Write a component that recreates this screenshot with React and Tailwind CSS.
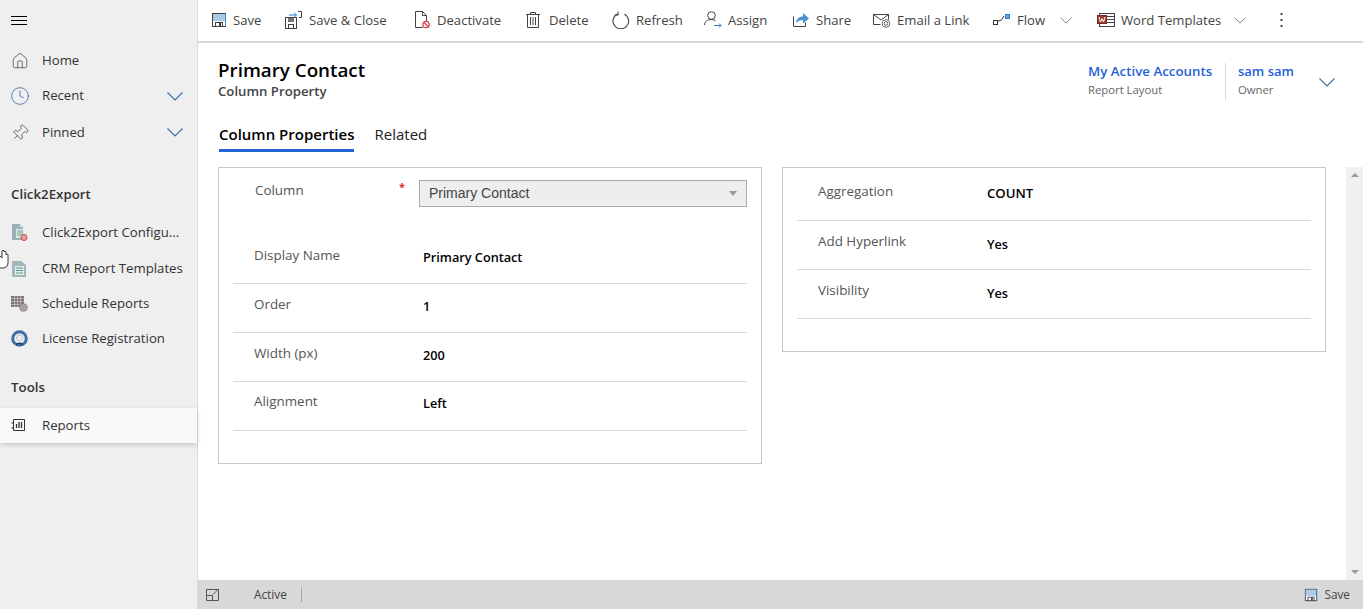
import React from 'react';
import { Home, Clock, Pin } from 'lucide-react';

const Chevron = ({ width = 16, className = '' }) => (
  <svg width={width} height={width / 2 + 1} viewBox="0 0 16 9" fill="none" stroke="currentColor" strokeWidth="1.100" className={`shrink-0 ${className}`}>
    <path d="M.5.5 8 8 15.500.5" />
  </svg>
);

const SaveIcon = ({ size = 16 }) => (
  <svg width={size} height={size} viewBox="0 0 16 16" fill="none">
    <rect x="1.500" y="1.500" width="13" height="13" fill="#fff" stroke="#3f3f3f" />
    <rect x="2" y="2" width="12" height="7" fill="#a9cbe8" />
    <path d="M14.500 1.500v13" stroke="#3f86c6" />
    <rect x="4.500" y="10.500" width="7" height="4" fill="#fff" stroke="#3f3f3f" />
    <rect x="8" y="11" width="2" height="3" fill="#3f3f3f" />
  </svg>
);

const SaveCloseIcon = () => (
  <svg width="18" height="18" viewBox="0 0 18 18" fill="none">
    <rect x="0.500" y="6.500" width="11" height="11" fill="#fff" stroke="#3f3f3f" />
    <rect x="3" y="7" width="6" height="4" fill="#777" />
    <rect x="3.500" y="13.500" width="5" height="4" stroke="#3f3f3f" />
    <path d="M4 4h7M9 1.500 11.500 4 9 6.500" stroke="#2b7cd3" />
    <path d="M13 .5h3.500v6H14" stroke="#3f3f3f" />
  </svg>
);

const DeactivateIcon = () => (
  <svg width="18" height="18" viewBox="0 0 18 18" fill="none">
    <path d="M1.500.5h7l4 4v6M8.500.5v4h4M1.500.5v16h7" stroke="#444" />
    <circle cx="12" cy="13.500" r="3.200" fill="#fff" stroke="#d9434e" strokeWidth="1.300" />
    <path d="m9.800 11.300 4.400 4.400" stroke="#d9434e" strokeWidth="1.300" />
  </svg>
);

const DeleteIcon = () => (
  <svg width="14" height="18" viewBox="0 0 14 18" fill="none" stroke="#444">
    <path d="M0 3.500h14M4.500 3.500v-2h5v2M1.500 3.500v13h11v-13M4.500 6v8M7 6v8M9.500 6v8" />
  </svg>
);

const RefreshIcon = () => (
  <svg width="18" height="18" viewBox="0 0 18 18" fill="none" stroke="#444" strokeWidth="1.100">
    <path d="M5.500 3a7.800 7.800 0 1 0 7 .2" />
    <path d="M6 .5V4H2.500" />
  </svg>
);

const AssignIcon = () => (
  <svg width="18" height="18" viewBox="0 0 18 18" fill="none">
    <circle cx="7.500" cy="4.500" r="3.800" stroke="#444" />
    <path d="M.5 14c0-3.500 3-5.500 7-5.500 1.500 0 2.800.4 4 1.200" stroke="#444" />
    <path d="M10 14.500h7M15 12.500l2 2-2 2" stroke="#2b7cd3" />
  </svg>
);

const ShareIcon = () => (
  <svg width="18" height="18" viewBox="0 0 18 18" fill="none">
    <path d="M1.500 5.500v10h12v-4" stroke="#444" />
    <path d="M4 12c.5-4 3-6.500 7-6.500V2l6 5.500-6 5V9c-3 0-5 1-7 3z" fill="#4a90d2" />
  </svg>
);

const EmailIcon = () => (
  <svg width="18" height="18" viewBox="0 0 18 18" fill="none" stroke="#444">
    <path d="M.5 3.500h15v5M.5 3.500v10h7M.5 3.500l7.500 5.500 7.500-5.500" />
    <circle cx="13" cy="12.500" r="1.800" stroke="#666" />
    <circle cx="13" cy="12.500" r="3.800" stroke="#666" />
  </svg>
);

const FlowIcon = () => (
  <svg width="18" height="18" viewBox="0 0 18 18" fill="none">
    <rect x="0.500" y="9.500" width="4" height="4" stroke="#333" />
    <path d="m5 10 3-.5L11 5" stroke="#333" />
    <rect x="12.500" y="3.500" width="4" height="4" fill="#6aa9de" stroke="#2b7cd3" />
  </svg>
);

const WordIcon = () => (
  <svg width="18" height="18" viewBox="0 0 18 18" fill="none">
    <rect x="2.500" y="2.500" width="15" height="13" fill="#fff" stroke="#444" />
    <path d="M10 5.500h7M10 8.500h7M10 11.500h7" stroke="#444" />
    <rect x="0.500" y="4.500" width="9" height="8" fill="#9c3b30" stroke="#7a2a20" />
    <path d="m2 6 1.500 5L5 7.500 6.500 11 8 6" stroke="#fff" />
  </svg>
);

const ExportDocIcon = () => (
  <svg width="17" height="17" viewBox="0 0 17 17">
    <path d="M1 0h8l3 3v13H1z" fill="#9db0b8" />
    <path d="M9 0l3 3H9z" fill="#dfe6e9" />
    <rect x="5" y="5" width="8" height="9" fill="#dfe9e4" />
    <path d="M6 7h6M6 9h6M6 11h6" stroke="#6fa58f" />
    <circle cx="13" cy="13.500" r="3" fill="#e6a0a0" stroke="#c94f4f" />
  </svg>
);

const TemplateIcon = () => (
  <svg width="15" height="17" viewBox="0 0 15 17" className="ml-px">
    <path d="M0 1h9l5 4v12H0z" fill="#a3b6be" />
    <rect x="3" y="6" width="9" height="9" fill="#e4efea" />
    <path d="M4 8h7M4 10.500h7M4 13h7" stroke="#4e9d80" />
  </svg>
);

const ScheduleIcon = () => (
  <svg width="17" height="17" viewBox="0 0 17 17">
    <rect x="0" y="1" width="13" height="11" fill="#7c7478" />
    <path d="M0 3.500h13M0 6.500h13M0 9.500h13M3.500 1v11M6.500 1v11M9.500 1v11" stroke="#c9c4c6" strokeWidth="0.700" />
    <circle cx="12.500" cy="12.500" r="3.800" fill="#a9a9a9" stroke="#8a8a8a" />
    <path d="m11 12.500 1.200 1.200 2-2" stroke="#e06a6a" fill="none" />
  </svg>
);

const LicenseIcon = () => (
  <svg width="17" height="17" viewBox="0 0 17 17" fill="none">
    <circle cx="8.500" cy="8.500" r="6.800" stroke="#3d6fa3" strokeWidth="3" />
    <circle cx="8.500" cy="8" r="3" stroke="#b5c5d4" />
    <path d="M5 15c1-2.500 6-2.500 7 0" stroke="#20456d" strokeWidth="1.500" />
  </svg>
);

const ReportsIcon = () => (
  <svg width="15" height="16" viewBox="0 0 15 16" fill="none" stroke="#333">
    <path d="M2.500 1.500h11v11h-11zM2.500 5H.5M2.500 10H.5" />
    <path d="M5.500 6v4M8 4v6M10.500 4v6" strokeWidth="1.300" />
  </svg>
);

const HandCursor = () => (
  <svg width="10" height="20" viewBox="0 0 10 20" fill="none" className="absolute left-0 top-[250px]">
    <path d="M0 18h3c3 0 5-2 5-5V5C8 4 6 4 6 5V2C6 1 4 1 4 2V1C4 0 2 0 2 1v7L0 6" fill="#fff" stroke="#222" strokeWidth="0.900" />
  </svg>
);

const tools = [
  { label: 'Save', icon: <SaveIcon />, box: 'w-[74px]', gap: 'gap-[6px]' },
  { label: 'Save & Close', icon: <SaveCloseIcon />, box: 'w-[129px]', gap: 'gap-[6px]' },
  { label: 'Deactivate', icon: <DeactivateIcon />, box: 'w-[112px]', gap: 'gap-[5px]' },
  { label: 'Delete', icon: <DeleteIcon />, box: 'w-[86px]', gap: 'gap-[9px]' },
  { label: 'Refresh', icon: <RefreshIcon />, box: 'w-[92px]', gap: 'gap-[6px]' },
  { label: 'Assign', icon: <AssignIcon />, box: 'w-[88px]', gap: 'gap-[6px]' },
  { label: 'Share', icon: <ShareIcon />, box: 'w-[81px]', gap: 'gap-[6px]' },
  { label: 'Email a Link', icon: <EmailIcon />, box: 'w-[120px]', gap: 'gap-[6px]' },
  { label: 'Flow', icon: <FlowIcon />, box: 'w-[104px]', gap: 'gap-[6px]', more: 'ml-[9px]' },
  { label: 'Word Templates', icon: <WordIcon />, box: 'w-[183px]', gap: 'gap-[6px]', more: 'ml-[7px]' },
];

const NavItem = ({ icon, label, chevron, className = '' }) => (
  <div className={`flex items-center pl-[11px] pr-[14px] ${className}`}>
    <div className="flex w-[31px] shrink-0 items-center">{icon}</div>
    <span className="min-w-0 flex-1 text-[13.2px] whitespace-nowrap text-[#333]">{label}</span>
    {chevron && <Chevron className="text-[#3a6ea5]" />}
  </div>
);

const Row = ({ label, value, labelPad = 'pt-[10px]', valuePad = 'pt-[13px]', valueSize = 'text-[12.7px]' }) => (
  <div className="flex h-[49px] border-b border-[#d8d8d8] pl-[21px]">
    <div className={`w-[169px] text-[13.4px] text-[#555] ${labelPad}`}>{label}</div>
    <div className={`font-semibold text-black ${valueSize} ${valuePad}`}>{value}</div>
  </div>
);

const App = () => {
  return (
    <div className="relative flex h-[609px] w-[1363px] overflow-hidden bg-white font-['Open_Sans',sans-serif]">
      <aside className="w-[198px] shrink-0 border-r border-[#dcdcdc] bg-[#efefef]">
        <div className="flex h-[42px] items-center pl-[11px]">
          <svg width="16" height="10" viewBox="0 0 16 10" stroke="#000">
            <path d="M0 .5h16M0 4.500h16M0 8.500h16" />
          </svg>
        </div>
        <NavItem className="h-[37px]" icon={<Home size={18} strokeWidth={1} className="text-[#444]" />} label="Home" />
        <NavItem className="h-[34px]" icon={<Clock size={20} strokeWidth={1} className="-ml-px text-[#3a6ea5]" />} label="Recent" chevron />
        <NavItem className="h-[39px]" icon={<Pin size={18} strokeWidth={1} className="rotate-45 text-[#444]" />} label="Pinned" chevron />
        <div className="mt-[33px] h-[26px] pl-[11px] text-[13.3px] font-semibold text-[#333]">Click2Export</div>
        <NavItem className="mt-[3px] h-[37px]" icon={<ExportDocIcon />} label="Click2Export Configu..." />
        <NavItem className="h-[35px]" icon={<TemplateIcon />} label="CRM Report Templates" />
        <NavItem className="h-[35px]" icon={<ScheduleIcon />} label="Schedule Reports" />
        <NavItem className="h-[35px]" icon={<LicenseIcon />} label="License Registration" />
        <div className="mt-[22px] h-[26px] pl-[11px] text-[13.3px] font-semibold text-[#333]">Tools</div>
        <NavItem className="mt-[4px] h-[35px] bg-[#f9f9f9] shadow-[0_2px_5px_rgba(0,0,0,0.16)]" icon={<ReportsIcon />} label="Reports" />
      </aside>

      <main className="flex min-w-0 flex-1 flex-col">
        <div className="flex h-[43px] shrink-0 items-center border-b-2 border-[#d8d8d8] pl-[13px] text-[13.1px] text-[#444]">
          {tools.map((t) => (
            <div key={t.label} className={`flex items-center whitespace-nowrap ${t.box} ${t.gap}`}>
              {t.icon}
              <span className="mt-px">{t.label}</span>
              {t.more && <Chevron width={12} className={`text-[#667] ${t.more}`} />}
            </div>
          ))}
          <svg width="3" height="14" viewBox="0 0 3 14" fill="#444" className="-mt-[1px]">
            <rect x="0.500" y="0" width="2" height="2" />
            <rect x="0.500" y="6" width="2" height="2" />
            <rect x="0.500" y="12" width="2" height="2" />
          </svg>
        </div>

        <div className="flex h-[58px] shrink-0 items-start pt-[16px]">
          <div className="pl-[20px]">
            <div className="text-[18.8px] leading-[22px] font-semibold text-black">Primary Contact</div>
            <div className="mt-[1px] text-[13.2px] leading-[18px] font-semibold text-[#444]">Column Property</div>
          </div>
          <div className="ml-auto flex items-start">
            <div className="w-[137px] pt-[2px]">
              <div className="text-[13.3px] leading-[20px] font-semibold text-[#1f5fdc]">My Active Accounts</div>
              <div className="text-[11.3px] leading-[17px] text-[#666]">Report Layout</div>
            </div>
            <div className="mt-[4px] h-[37px] w-px bg-[#d8d8d8]" />
            <div className="w-[93px] pl-[12px] pt-[2px]">
              <div className="text-[13px] leading-[20px] font-semibold text-[#1f5fdc]">sam sam</div>
              <div className="text-[11.3px] leading-[17px] text-[#666]">Owner</div>
            </div>
            <Chevron className="mr-[28px] mt-[19px] text-[#3a6ea5]" />
          </div>
        </div>

        <div className="flex h-[66px] shrink-0 items-start gap-[20px] pl-[21px] pt-[22px] text-[15px] leading-[22px]">
          <div className="h-[29px] border-b-[3px] border-[#2563d9] font-semibold text-black">Column Properties</div>
          <div className="text-[#222]">Related</div>
        </div>

        <div className="relative flex min-h-0 flex-1 pl-[20px]">
          <div className="flex items-start gap-[20px]">
            <section className="h-[297px] w-[544px] border border-[#c8c8c8] px-[14px]">
              <div className="flex h-[67px] pl-[22px]">
                <div className="w-[144px] pt-[12px] text-[13.4px] text-[#555]">Column</div>
                <div className="w-[20px] pt-[12px] text-[11px] leading-[14px] font-semibold text-[#e00000]">*</div>
                <div className="mt-[12px] flex h-[27px] w-[328px] items-center justify-between border border-[#aaa] bg-[#eeeeee] pl-[9px] pr-[9px] font-['Liberation_Sans',sans-serif] text-[14px] text-[#444]">
                  Primary Contact
                  <span className="h-0 w-0 border-x-[4px] border-t-[5px] border-x-transparent border-t-[#999]" />
                </div>
              </div>
              <Row label="Display Name" value="Primary Contact" />
              <Row label="Order" value="1" />
              <Row label="Width (px)" value="200" />
              <Row label="Alignment" value="Left" labelPad="pt-[9px]" valuePad="pt-[12px]" />
            </section>
            <section className="h-[185px] w-[544px] border border-[#c8c8c8] px-[14px] pt-[4px]">
              <Row label="Aggregation" value="COUNT" valueSize="text-[13.2px]" labelPad="pt-[9px]" valuePad="pt-[12px]" />
              <Row label="Add Hyperlink" value="Yes" valuePad="pt-[14px]" />
              <Row label="Visibility" value="Yes" valuePad="pt-[14px]" />
            </section>
          </div>
          <div className="absolute right-0 top-0 flex h-full w-[17px] flex-col items-center justify-between bg-[#f0f0f0] py-[6px]">
            <span className="h-0 w-0 border-x-[4px] border-b-[4px] border-x-transparent border-b-[#999]" />
            <span className="h-0 w-0 border-x-[4px] border-t-[4px] border-x-transparent border-t-[#999]" />
          </div>
        </div>

        <footer className="flex h-[29px] shrink-0 items-center bg-[#d8d8d8] pl-[8px] pr-[13px] text-[11.8px] text-[#444]">
          <svg width="13" height="12" viewBox="0 0 13 12" fill="none" stroke="#555">
            <path d="M.5 6.500v5h6v-5zM.5 6.500v-6h12v11h-6M7 5.500l5-5M9 .5h3.500V4" />
          </svg>
          <span className="ml-[35px]">Active</span>
          <span className="ml-[14px] h-[15px] w-px bg-[#a8a8a8]" />
          <div className="ml-auto flex items-center gap-[6px]">
            <SaveIcon size={14} />
            Save
          </div>
        </footer>
      </main>
      <HandCursor />
    </div>
  );
};

export default App;
